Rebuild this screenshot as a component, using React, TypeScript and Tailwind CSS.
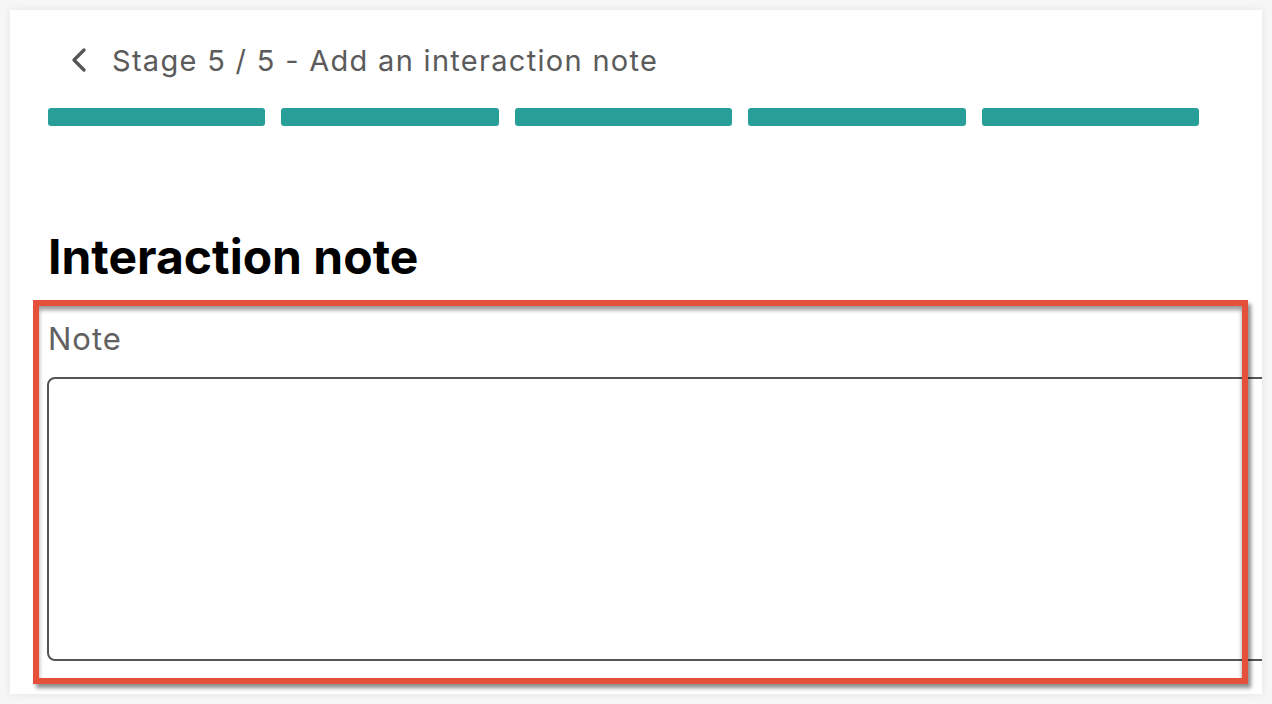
import React from "react";
import { ChevronLeft } from "lucide-react";

const stages = [1, 2, 3, 4, 5];

const App: React.FC = () => {
  return (
    <div className="relative w-[1272px] h-[704px] bg-[#f6f6f6] p-[10px] font-['Inter',sans-serif] overflow-hidden">
      {/* Card */}
      <div className="w-[1252px] h-[684px] bg-white shadow-[0_0_8px_rgba(0,0,0,0.08)] overflow-hidden pl-[38px] pt-[30px]">
        {/* Header */}
        <div className="flex items-center h-[40px]">
          <ChevronLeft className="ml-[11px] w-[40px] h-[40px] text-[#555]" strokeWidth={2} />
          <span className="ml-[13px] text-[29px] tracking-[1.3px] text-[#5b5b5b] leading-none">
            Stage 5 / 5 - Add an interaction note
          </span>
        </div>

        {/* Progress */}
        <div className="flex gap-[16px] mt-[28px] w-[1151px]">
          {stages.map((s) => (
            <div key={s} className="flex-1 h-[18px] rounded-[3px] bg-[#289e98]" />
          ))}
        </div>

        {/* Title */}
        <h1 className="mt-[103px] text-[48px] font-bold text-black leading-[56px]">
          Interaction note
        </h1>

        {/* Note field */}
        <div className="mt-[38px]">
          <label className="block text-[31px] tracking-[1px] text-[#616161] leading-none">Note</label>
          <textarea className="block mt-[23px] ml-[-1px] w-[1240px] h-[284px] border-2 border-[#555] rounded-[8px] resize-none outline-none" />
        </div>
      </div>

      {/* Annotation frame */}
      <div className="absolute left-[33px] top-[300px] w-[1215px] h-[384px] border-[6px] border-[#e5503a] shadow-[3px_4px_4px_rgba(0,0,0,0.45),inset_0_4px_4px_rgba(0,0,0,0.4)] pointer-events-none" />
    </div>
  );
};

export default App;
